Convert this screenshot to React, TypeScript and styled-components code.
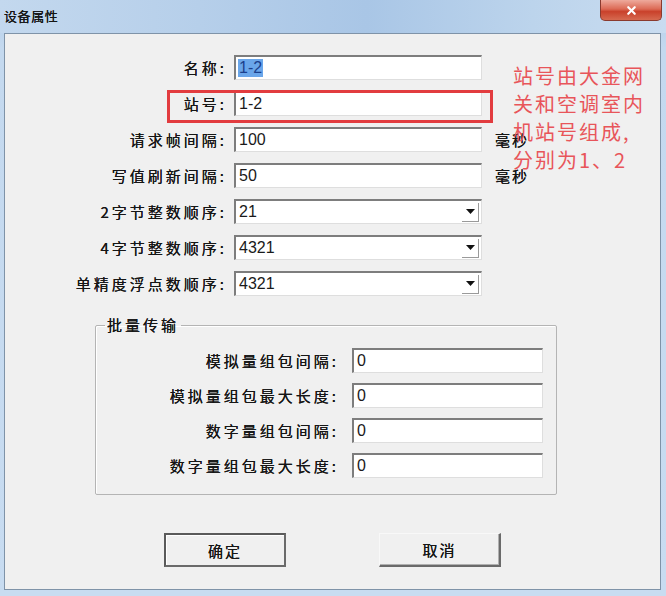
import React from 'react'
import styled, { createGlobalStyle } from 'styled-components'
import { X } from 'lucide-react'

const GlobalStyle = createGlobalStyle`
  html, body {
    margin: 0;
    padding: 0;
    background: #c6dbf0;
  }
  * {
    box-sizing: border-box;
  }
`

const cjk = `"Noto Sans CJK SC", "Noto Sans", sans-serif`

const Window = styled.div`
  width: 666px;
  height: 596px;
  display: flex;
  flex-direction: column;
  background: linear-gradient(180deg, #b2cce8 0%, #c4d9ef 8%, #c8dcf1 100%);
  font-family: ${cjk};
  color: #161616;
`

const TitleBar = styled.div`
  height: 33px;
  flex: none;
  display: flex;
  justify-content: space-between;
  align-items: flex-start;
  padding: 0 4px 0 4px;
  background: linear-gradient(90deg, #c3d8ee 0%, #b6cfea 30%, #a9c6e6 55%, #bcd4ec 80%, #c9dcf0 100%);
`

const Title = styled.div`
  font-size: 13px;
  letter-spacing: 0.6px;
  line-height: 13px;
  margin-top: 9px;
  color: #151515;
  text-shadow: 0 0 0.4px #151515;
`

const CloseButton = styled.div`
  width: 62px;
  height: 21px;
  display: flex;
  align-items: center;
  justify-content: center;
  border: 1px solid #8a3a2e;
  border-top: none;
  border-radius: 0 0 5px 5px;
  background: linear-gradient(180deg, #eeaa9c 0%, #dc6a55 45%, #c9412b 58%, #d66a50 100%);
  color: #fff;
`

const Body = styled.div`
  position: relative;
  flex: 1;
  margin: 0 5px 6px 4px;
  border: 1px solid #7f93a8;
  background: #f0f0f0;
  padding-top: 21px;
`

const Form = styled.div`
  display: grid;
  grid-template-columns: 222px 248px auto;
  grid-auto-rows: 25px;
  column-gap: 7px;
  row-gap: 11px;
  align-items: center;
`

const Label = styled.div`
  font-size: 15px;
  letter-spacing: 3px;
  text-align: right;
  white-space: nowrap;
  line-height: 25px;
  text-shadow: 0 0 0.4px #161616;
`

const Field = styled.div<{ $selected?: boolean }>`
  height: 25px;
  display: flex;
  align-items: center;
  background: #fff;
  border-top: 2px solid #7d7d7d;
  border-left: 2px solid #7d7d7d;
  border-right: 1px solid #dedede;
  border-bottom: 1px solid #dedede;
  padding-left: 2px;
  font-family: "Liberation Sans", Arial, sans-serif;
  font-size: 16px;
  color: #1a1a1a;
  span {
    padding: 0 1px;
    background: ${(p) => (p.$selected ? '#6aa6ea' : 'transparent')};
    color: ${(p) => (p.$selected ? '#1b3f8c' : '#1a1a1a')};
  }
`

const ComboBox = styled(Field)`
  justify-content: space-between;
  padding-right: 2px;
`

const DropButton = styled.div`
  width: 17px;
  height: 19px;
  display: flex;
  align-items: center;
  justify-content: center;
  border-bottom: 1px solid #9a9a9a;
  border-right: 1px solid #9a9a9a;
`

const Suffix = styled.div`
  font-size: 15px;
  letter-spacing: 2px;
  margin-left: 6px;
  white-space: nowrap;
  text-shadow: 0 0 0.4px #161616;
`

const Group = styled.fieldset`
  margin: 19px 0 0 90px;
  width: 462px;
  padding: 13px 0 16px 0;
  border: 1px solid #b4b4b4;
  border-radius: 2px;
  box-shadow: inset 1px 1px 0 #fff;
`

const Legend = styled.legend`
  margin-left: 9px;
  padding: 0 2px;
  font-size: 15px;
  letter-spacing: 3px;
  line-height: 20px;
  text-shadow: 0 0 0.4px #161616;
`

const GroupForm = styled(Form)`
  grid-template-columns: 243px 191px;
  column-gap: 13px;
  row-gap: 10px;
`

const ButtonRow = styled.div`
  display: flex;
  gap: 93px;
  margin-top: 38px;
  padding-left: 159px;
`

const Button = styled.div<{ $default?: boolean }>`
  width: 122px;
  height: 34px;
  display: flex;
  align-items: center;
  justify-content: center;
  font-size: 15px;
  letter-spacing: 2px;
  text-shadow: 0 0 0.4px #161616;
  background: #f0f0f0;
  border: ${(p) => (p.$default ? '2px solid #5a5a5a' : '1px solid #f8f8f8')};
  border-right: 2px solid #6a6a6a;
  border-bottom: 2px solid #6a6a6a;
  box-shadow: ${(p) => (p.$default ? 'inset 1px 1px 0 #fff' : 'inset -1px -1px 0 #b0b0b0')};
`

const Highlight = styled.div`
  position: absolute;
  left: 162px;
  top: 56px;
  width: 326px;
  height: 33px;
  border: 3px solid #e23c3f;
  pointer-events: none;
`

const Note = styled.div`
  position: absolute;
  left: 508px;
  top: 28px;
  font-size: 20px;
  line-height: 28px;
  letter-spacing: 2px;
  color: #e8555a;
  white-space: pre-line;
`

function Arrow() {
  return (
    <DropButton>
      <svg width="9" height="5" viewBox="0 0 9 5">
        <path d="M0 0 H9 L4.5 5 Z" fill="#111" />
      </svg>
    </DropButton>
  )
}

const topRows: { label: string; value: string; suffix?: string; selected?: boolean; combo?: boolean }[] = [
  { label: '名称:', value: '1-2', selected: true },
  { label: '站号:', value: '1-2' },
  { label: '请求帧间隔:', value: '100', suffix: '毫秒' },
  { label: '写值刷新间隔:', value: '50', suffix: '毫秒' },
  { label: '2字节整数顺序:', value: '21', combo: true },
  { label: '4字节整数顺序:', value: '4321', combo: true },
  { label: '单精度浮点数顺序:', value: '4321', combo: true },
]

const batchRows = ['模拟量组包间隔:', '模拟量组包最大长度:', '数字量组包间隔:', '数字量组包最大长度:']

export default function App() {
  return (
    <>
      <GlobalStyle />
      <Window>
        <TitleBar>
          <Title>设备属性</Title>
          <CloseButton>
            <X size={13} strokeWidth={4} />
          </CloseButton>
        </TitleBar>
        <Body>
          <Form>
            {topRows.map((r) => (
              <React.Fragment key={r.label}>
                <Label>{r.label}</Label>
                {r.combo ? (
                  <ComboBox>
                    <span>{r.value}</span>
                    <Arrow />
                  </ComboBox>
                ) : (
                  <Field $selected={r.selected}>
                    <span>{r.value}</span>
                  </Field>
                )}
                <Suffix>{r.suffix ?? ''}</Suffix>
              </React.Fragment>
            ))}
          </Form>

          <Group>
            <Legend>批量传输</Legend>
            <GroupForm>
              {batchRows.map((l) => (
                <React.Fragment key={l}>
                  <Label>{l}</Label>
                  <Field>
                    <span>0</span>
                  </Field>
                </React.Fragment>
              ))}
            </GroupForm>
          </Group>

          <ButtonRow>
            <Button $default>确定</Button>
            <Button>取消</Button>
          </ButtonRow>

          <Highlight />
          <Note>{'站号由大金网\n关和空调室内\n机站号组成,\n分别为1、2'}</Note>
        </Body>
      </Window>
    </>
  )
}
